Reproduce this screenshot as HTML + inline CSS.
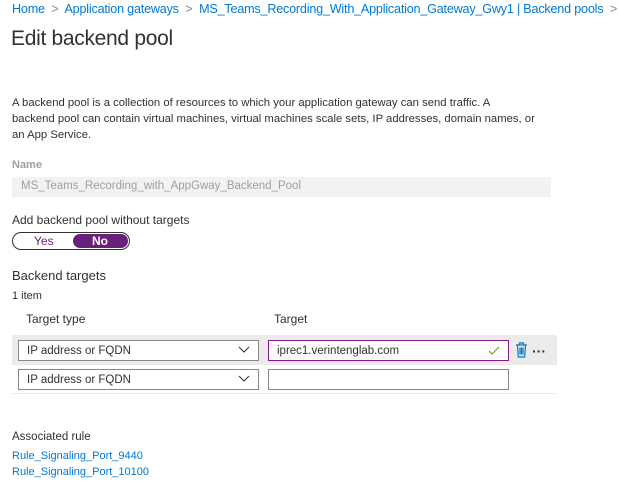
<!DOCTYPE html>
<html><head><style>
body{margin:0;width:619px;height:482px;background:#fff;font-family:"Liberation Sans",sans-serif;color:#323130;position:relative;overflow:hidden}
.a{position:absolute;white-space:nowrap}
.l{color:#0078d4}
.s{font-size:12px}
.box{position:absolute;border:1px solid #8a8886;background:#fff;box-sizing:border-box;font-size:12px;line-height:20px;padding-left:8px}
.chev{position:absolute;right:8px;top:5px}
</style></head><body>
<div class="a s l" style="left:12px;top:2px;font-size:12.6px;letter-spacing:-0.2px">Home <span style="color:#8a8886">&nbsp;&gt;&nbsp;</span> Application gateways <span style="color:#8a8886">&nbsp;&gt;&nbsp;</span> MS_Teams_Recording_With_Application_Gateway_Gwy1 | Backend pools <span style="color:#8a8886">&nbsp;&gt;</span></div>
<div class="a" style="left:11px;top:27px;font-size:21px;letter-spacing:-0.3px">Edit backend pool</div>
<div class="a s" style="left:12px;top:95px;line-height:16px;font-size:11.3px">A backend pool is a collection of resources to which your application gateway can send traffic. A<br>backend pool can contain virtual machines, virtual machines scale sets, IP addresses, domain names, or<br>an App Service.</div>
<div class="a s" style="left:12px;top:159px;color:#a19f9d;font-weight:bold;font-size:11px">Name</div>
<div class="a" style="left:12px;top:177px;width:539px;height:20px;background:#f3f2f1"></div>
<div class="a s" style="left:21px;top:180px;color:#a19f9d;font-size:11.5px">MS_Teams_Recording_with_AppGway_Backend_Pool</div>
<div class="a s" style="left:12px;top:213px;font-size:12px">Add backend pool without targets</div>
<div class="a" style="left:12px;top:232px;width:118px;height:18px;border:1px solid #323130;border-radius:10px;box-sizing:border-box"></div>
<div class="a" style="left:73px;top:234px;width:55px;height:14px;background:#68217a;border-radius:8px"></div>
<div class="a s" style="left:34px;top:234px;color:#68217a">Yes</div>
<div class="a s" style="left:92px;top:234px;color:#fff;font-weight:bold">No</div>
<div class="a" style="left:12px;top:268px;font-size:13px">Backend targets</div>
<div class="a s" style="left:12px;top:290px;font-size:11px">1 item</div>
<div class="a s" style="left:26px;top:312px">Target type</div>
<div class="a s" style="left:274px;top:312px">Target</div>
<div class="a" style="left:12px;top:335px;width:545px;height:30px;background:#edebe9"></div>
<div class="box" style="left:18px;top:340px;width:241px;height:21px;font-size:11.5px">IP address or FQDN<svg class="chev" width="12" height="8" viewBox="0 0 12 8"><path d="M1 1l5 5 5-5" fill="none" stroke="#323130"/></svg></div>
<div class="box" style="left:268px;top:340px;width:241px;height:21px;border-color:#881798;font-size:11.5px">iprec1.verintenglab.com<svg class="chev" width="12" height="10" viewBox="0 0 12 10"><path d="M1 5l3 3 7-7" fill="none" stroke="#57a300"/></svg></div>
<svg class="a" style="left:515px;top:342px" width="13" height="16" viewBox="0 0 13 16"><path d="M1 3h11M4.5 3V1h4v2M2.5 3l.8 12h6.4l.8-12M5 5.5v7M6.5 5.5v7M8 5.5v7" fill="none" stroke="#0078d4" stroke-width="1.2"/></svg>
<div class="a" style="left:532px;top:343px;font-size:14px;color:#323130;font-weight:bold">···</div>
<div class="box" style="left:18px;top:369px;width:241px;height:21px;font-size:11.5px">IP address or FQDN<svg class="chev" width="12" height="8" viewBox="0 0 12 8"><path d="M1 1l5 5 5-5" fill="none" stroke="#323130"/></svg></div>
<div class="box" style="left:268px;top:369px;width:241px;height:21px"></div>
<div class="a" style="left:12px;top:393px;width:545px;height:1px;background:#edebe9"></div>
<div class="a s" style="left:12px;top:431px;font-size:11.5px">Associated rule</div>
<div class="a s l" style="left:12px;top:450px;font-size:11px">Rule_Signaling_Port_9440</div>
<div class="a s l" style="left:12px;top:466px;font-size:11px">Rule_Signaling_Port_10100</div>
</body></html>
